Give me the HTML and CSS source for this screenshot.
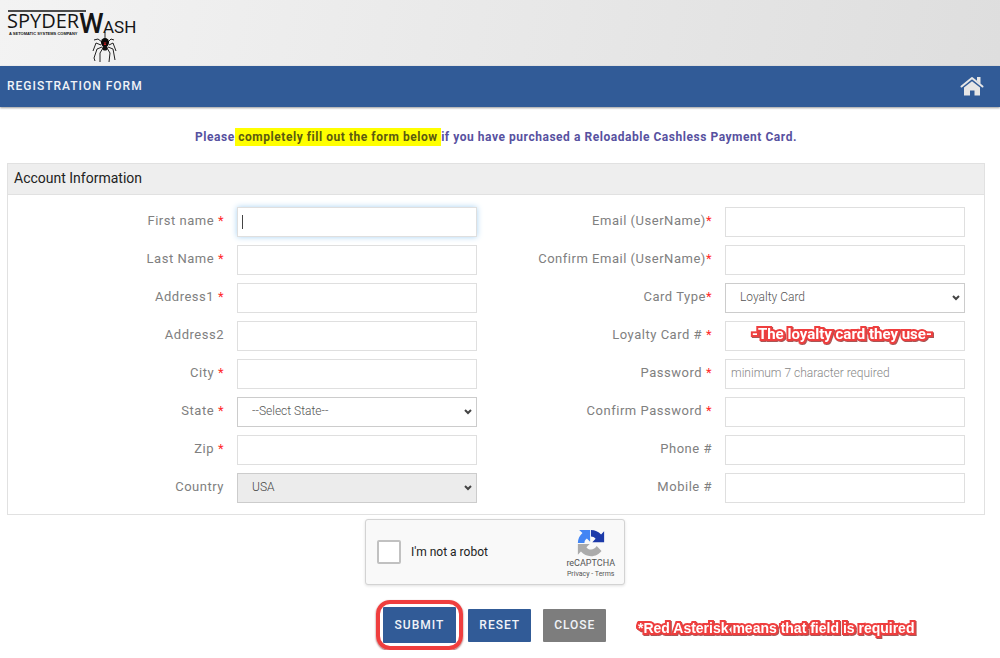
FILE: index.html
```html
<!DOCTYPE html>
<html lang="en">
<head>
<meta charset="utf-8">
<title>Registration Form</title>
<link rel="stylesheet" href="styles.css">
</head>
<body>
<header class="brand">
  <svg class="logo" viewBox="0 0 136 60" width="136" height="60" role="img" aria-label="SpyderWash">
    <path d="M8 8H86" stroke="#151515" stroke-width="1.300"/>
    <text class="logo-name" x="7" y="25">SPYDER</text>
    <text class="logo-tag" x="9" y="32">A SETOMATIC SYSTEMS COMPANY</text>
    <text class="logo-w" x="79" y="30">W</text>
    <text class="logo-ash" x="103" y="30">ASH</text>
    <path d="M105 29V37" stroke="#222" stroke-width="1"/>
    <g fill="none" stroke="#222" stroke-width="1" stroke-linejoin="round">
      <path d="M102 39l-4-3-4 1M101 42l-5-2-3 8M102 44l-5 2-3 9 1 3M103 45l-3 5 0 9M108 39l3-3 3 1M109 42l4-2 3 8M108 44l5 2 2 11M107 45l3 5-1 9"/>
    </g>
    <ellipse cx="105" cy="39.500" rx="4" ry="4.600" fill="#080808"/>
    <ellipse cx="105" cy="45" rx="2.600" ry="2.600" fill="#111"/>
    <path d="M103.500 39.500h3l-1.500 1.500zM105 40.500l1.500 1.500h-3z" fill="#e02020"/>
  </svg>
</header>
<div class="titlebar">
  <h1 class="title">REGISTRATION FORM</h1>
  <a class="home" href="#" aria-label="Home">
    <svg viewBox="0 0 24 20" width="24" height="20">
      <path d="M1.500 10.500L12 2 22.500 10.500" fill="none" stroke="#e6e6e6" stroke-width="2" stroke-linecap="round" stroke-linejoin="round"/>
      <path d="M17 1h3.500v7L17 5z" fill="#e6e6e6"/>
      <path d="M4 11.600L12 5.200l8 6.400V19.500H14.500V14.500h-4.500v5H4z" fill="#e6e6e6"/>
    </svg>
  </a>
</div>
<main class="page">
  <p class="intro">Please<mark class="hl"> completely fill out the form below </mark>if you have purchased a Reloadable Cashless Payment Card.</p>
  <form>
    <section class="panel">
      <h2 class="panel-head">Account Information</h2>
      <div class="panel-body">
        <div class="col">
          <div class="row"><label for="fn">First name <b class="req">*</b></label><input class="field focused" id="fn" type="text"></div>
          <div class="row"><label for="ln">Last Name <b class="req">*</b></label><input class="field" id="ln" type="text"></div>
          <div class="row"><label for="a1">Address1 <b class="req">*</b></label><input class="field" id="a1" type="text"></div>
          <div class="row"><label for="a2">Address2</label><input class="field" id="a2" type="text"></div>
          <div class="row"><label for="city">City <b class="req">*</b></label><input class="field" id="city" type="text"></div>
          <div class="row"><label for="state">State <b class="req">*</b></label><select class="field pick" id="state"><option>--Select State--</option></select></div>
          <div class="row"><label for="zip">Zip <b class="req">*</b></label><input class="field" id="zip" type="text"></div>
          <div class="row"><label for="country">Country</label><select class="field pick" id="country" disabled><option>USA</option></select></div>
        </div>
        <div class="col">
          <div class="row"><label for="em">Email (UserName)<b class="req">*</b></label><input class="field" id="em" type="email"></div>
          <div class="row"><label for="cem">Confirm Email (UserName)<b class="req">*</b></label><input class="field" id="cem" type="email"></div>
          <div class="row"><label for="ct">Card Type<b class="req">*</b></label><select class="field pick" id="ct"><option>Loyalty Card</option></select></div>
          <div class="row"><label for="lc">Loyalty Card # <b class="req">*</b></label><div class="holder"><input class="field" id="lc" type="text"><span class="note note-over">-The loyalty card they use-</span></div></div>
          <div class="row"><label for="pw">Password <b class="req">*</b></label><input class="field" id="pw" type="password" placeholder="minimum 7 character required"></div>
          <div class="row"><label for="cpw">Confirm Password <b class="req">*</b></label><input class="field" id="cpw" type="password"></div>
          <div class="row"><label for="ph">Phone #</label><input class="field" id="ph" type="tel"></div>
          <div class="row"><label for="mb">Mobile #</label><input class="field" id="mb" type="tel"></div>
        </div>
      </div>
    </section>
    <div class="captcha-wrap">
      <div class="captcha">
        <input class="check" id="robot" type="checkbox"><label class="robot" for="robot">I'm not a robot</label>
        <div class="cap-brand">
          <svg viewBox="0 0 64 64" width="28" height="28" aria-hidden="true">
            <path d="M62 32V5l-7 7.500C49 5.500 41 2 32 2v15c4 0 8 1.500 10.500 5.500L35 30h27z" fill="#1c3aa9"/>
            <path d="M32 2H5l7.500 7C5.500 15 2 23 2 32h15c0-4 1.500-8 5.500-10.500L30 29V2z" fill="#4285f4"/>
            <path d="M2 32v27l7-7.500C15 58.500 23 62 32 62c10 0 19-5 24-12L45 39c-3 5-8 8-13 8-5 0-8-2-10.500-5.500L29 34H2z" fill="#ababab"/>
          </svg>
          <span class="cap-name">reCAPTCHA</span>
          <span class="cap-links"><a href="#">Privacy</a> - <a href="#">Terms</a></span>
        </div>
      </div>
    </div>
    <div class="actions">
      <div class="ring"><button class="btn" type="submit">SUBMIT</button></div>
      <button class="btn" type="reset">RESET</button>
      <button class="btn btn-close" type="button">CLOSE</button>
      <span class="note note-side">*Red Asterisk means that field is required</span>
    </div>
  </form>
</main>
</body>
</html>
```
FILE: styles.css
```css
* { box-sizing: border-box; }
body { margin: 0; background: #fff; font-family: Roboto, sans-serif; color: #777; }
h1, h2, p { margin: 0; }
.brand { height: 66px; padding-top: 3px; background: linear-gradient(100deg, #f3f3f3, #dedede); }
.logo { display: block; overflow: visible; fill: #151515; }
.logo-name { font: 400 20px "Open Sans", sans-serif; }
.logo-tag { font: 700 4px "Liberation Sans", sans-serif; }
.logo-w { font: 500 28px Roboto, sans-serif; }
.logo-ash { font: 400 17px Roboto, sans-serif; }
.titlebar { display: flex; justify-content: space-between; align-items: center; height: 41px; padding: 0 16px 2px 7px; background: #315b97; box-shadow: 0 1px 2px rgba(0, 0, 0, .4); }
.title { font-size: 12px; line-height: 16px; font-weight: 500; letter-spacing: 1px; color: #f0f3f8; }
.home, .home svg { display: block; }
.page { padding: 21px 15px 0 7px; }
.intro { text-align: center; font-size: 12px; line-height: 18px; font-weight: 700; letter-spacing: .045em; color: #5751a0; }
.hl { background: #ff0; color: #5c5a10; padding: 2px 0; }
.panel { margin-top: 17px; border: 1px solid #e1e1e1; }
.panel-head { padding: 4px 6px 6px; border-bottom: 1px solid #e1e1e1; background: #eee; font-size: 14px; line-height: 20px; font-weight: 400; color: #222; }
.panel-body { display: grid; grid-template-columns: 1fr 1fr; padding: 12px 0 11px; }
.col { display: grid; gap: 8px; padding-right: 19px; }
.row { display: grid; grid-template-columns: 9fr 10fr; column-gap: 13px; }
.row label { text-align: right; font-size: 13px; line-height: 28px; letter-spacing: .04em; color: #808080; white-space: nowrap; }
.req { font-weight: 400; color: #ff2a2a; }
.field { display: block; width: 100%; min-width: 0; height: 30px; margin: 0; padding: 0 5px 2px; border: 1px solid #dfdfdf; border-radius: 0; background: #fff; font: 300 12px Roboto, sans-serif; color: #555; outline: 0; }
.field::placeholder { color: #888; opacity: 1; }
.focused { background: linear-gradient(#444, #444) 4px 7px / 1px 14px no-repeat #fff; box-shadow: 0 0 6px #a9d2f2; }
.pick { appearance: none; padding-left: 14px; border-color: #ccc; opacity: 1; background: url("data:image/svg+xml,%3Csvg xmlns='http://www.w3.org/2000/svg' width='8' height='6'%3E%3Cpath d='M1 1l3 3 3-3' fill='none' stroke='%23444' stroke-width='2'/%3E%3C/svg%3E") right 4px center no-repeat #fff; }
.pick:disabled { background-color: #ececec; color: #444; }
.holder { position: relative; }
.note { font-weight: 700; font-size: 14px; line-height: 20px; color: #fff; -webkit-text-stroke: 4px #ef3e3e; paint-order: stroke fill; white-space: nowrap; filter: drop-shadow(1px 1px 0 #a55); }
.note-over { position: absolute; top: 3px; left: 27px; font-size: 15px; }
.captcha-wrap { display: flex; justify-content: center; padding-right: 2px; margin-top: 4px; }
.captcha { display: flex; align-items: center; width: 260px; height: 66px; padding: 0 9px 0 11px; border: 1px solid #d3d3d3; border-radius: 3px; background: #f9f9f9; box-shadow: 0 1px 3px rgba(0, 0, 0, .12); }
.check { appearance: none; width: 24px; height: 24px; margin: 0 10px 0 0; border: 2px solid #c1c1c1; border-radius: 2px; background: #fff; }
.robot { flex: 1; font-size: 12px; color: #222; }
.cap-brand { display: flex; flex-direction: column; align-items: center; color: #555; padding-top: 4px; }
.cap-name { font-size: 9px; line-height: 13px; }
.cap-links { font-size: 7px; line-height: 9px; }
.cap-links a { color: inherit; text-decoration: none; }
.actions { position: relative; display: flex; justify-content: center; align-items: center; margin-top: 15px; padding-right: 10px; }
.ring { margin-right: 5px; padding: 3px; border: 4px solid #ef3e3e; border-radius: 14px; box-shadow: 0 1px 2px #955; }
.btn { display: block; height: 33px; padding: 0 11px; border: 0; border-radius: 1px; background: #315b97; font: 500 12px Roboto, sans-serif; letter-spacing: 1px; color: #f0f3f8; }
.ring .btn { height: 36px; padding: 0 12px; }
.btn-close { margin-left: 12px; background: #7d7d7d; }
.note-side { position: absolute; left: 631px; top: 18px; font-family: "Liberation Sans", sans-serif; }
```
